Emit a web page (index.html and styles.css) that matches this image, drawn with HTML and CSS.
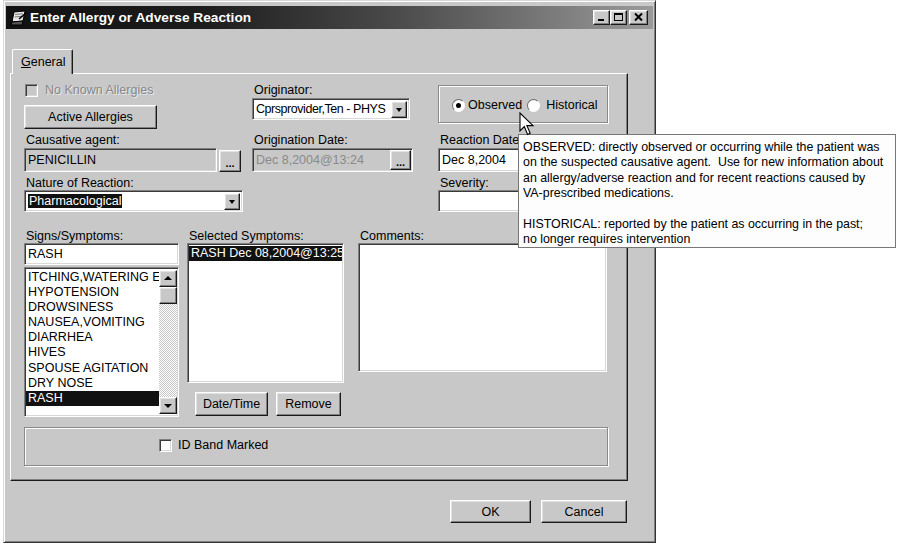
FILE: index.html
```html
<!DOCTYPE html>
<html lang="en">
<head>
    <meta charset="UTF-8">
    <title>Enter Allergy or Adverse Reaction</title>
    <link rel="stylesheet" href="styles.css">
</head>
<body>
<div class="screen">
    <div class="window">
        <div class="titlebar">
            <svg class="app-icon" width="17" height="16" viewBox="0 0 17 16">
                <polygon points="4,2 15,1 13,11 2,12" fill="#e8e8e8" stroke="#000" stroke-width="1"/>
                <line x1="5" y1="4.5" x2="13" y2="3.8" stroke="#777"/>
                <line x1="4.6" y1="7" x2="12.6" y2="6.3" stroke="#777"/>
                <polygon points="2,12 13,11 12,15 1,15" fill="#555" stroke="#000" stroke-width="1"/>
                <line x1="9" y1="9" x2="16" y2="3" stroke="#000" stroke-width="1.6"/>
            </svg>
            <span class="title">Enter Allergy or Adverse Reaction</span>
            <div class="caption-buttons">
                <span class="cap-btn raised">
                    <svg width="15" height="13" viewBox="0 0 15 13"><rect x="4" y="8" width="6" height="2" fill="#000"/></svg>
                </span>
                <span class="cap-btn raised">
                    <svg width="15" height="13" viewBox="0 0 15 13"><rect x="3.5" y="2.5" width="8" height="7" fill="none" stroke="#000"/><rect x="3" y="2" width="9" height="2" fill="#000"/></svg>
                </span>
                <span class="cap-btn cap-close raised">
                    <svg width="16" height="13" viewBox="0 0 16 13"><path d="M4 2.5 L11 9.5 M11 2.5 L4 9.5" stroke="#000" stroke-width="2"/></svg>
                </span>
            </div>
        </div>

        <div class="tabs">
            <div class="tab"><u>G</u>eneral</div>
        </div>

        <div class="panel">
            <div class="row row-top">
                <div class="col col-a">
                    <div class="check disabled"><span class="checkbox"></span>No Known Allergies</div>
                    <div class="btn raised btn-active">Active Allergies</div>
                </div>
                <div class="col col-b">
                    <div class="lbl">Originator:</div>
                    <div class="combo sunken combo-orig">
                        <span class="field-text tight">Cprsprovider,Ten - PHYS</span>
                        <span class="drop raised"></span>
                    </div>
                </div>
                <div class="col col-c">
                    <div class="group etched group-type">
                        <span class="radio on"></span><span class="opt-text">Observed</span>
                        <span class="radio"></span><span class="opt-text">Historical</span>
                    </div>
                </div>
            </div>

            <div class="row row-dates">
                <div class="col col-a">
                    <div class="lbl">Causative agent:</div>
                    <div class="field-line">
                        <div class="edit sunken readonly edit-agent"><span class="field-text">PENICILLIN</span></div>
                        <div class="btn raised btn-dots">...</div>
                    </div>
                </div>
                <div class="col col-b">
                    <div class="lbl">Origination Date:</div>
                    <div class="edit sunken readonly edit-orig">
                        <span class="field-text dim">Dec 8,2004@13:24</span>
                        <span class="btn raised btn-dots inner">...</span>
                    </div>
                </div>
                <div class="col col-c">
                    <div class="lbl">Reaction Date</div>
                    <div class="edit sunken edit-react"><span class="field-text">Dec 8,2004</span></div>
                </div>
            </div>

            <div class="row row-nature">
                <div class="col col-a">
                    <div class="lbl">Nature of Reaction:</div>
                    <div class="combo sunken combo-nature">
                        <span class="field-text"><span class="hilite">Pharmacological</span></span>
                        <span class="drop raised"></span>
                    </div>
                </div>
                <div class="col col-b"></div>
                <div class="col col-c">
                    <div class="lbl">Severity:</div>
                    <div class="edit sunken edit-severity"></div>
                </div>
            </div>

            <div class="row row-symptoms">
                <div class="col col-signs">
                    <div class="lbl">Signs/Symptoms:</div>
                    <div class="edit sunken edit-search"><span class="field-text">RASH</span></div>
                    <div class="listbox sunken list-signs">
                        <div class="items">
                            <div class="item">ITCHING,WATERING EYES</div>
                            <div class="item">HYPOTENSION</div>
                            <div class="item">DROWSINESS</div>
                            <div class="item">NAUSEA,VOMITING</div>
                            <div class="item">DIARRHEA</div>
                            <div class="item">HIVES</div>
                            <div class="item">SPOUSE AGITATION</div>
                            <div class="item">DRY NOSE</div>
                            <div class="item selected">RASH</div>
                        </div>
                        <div class="scrollbar">
                            <span class="sb-btn raised sb-up"></span>
                            <span class="sb-btn raised sb-thumb"></span>
                            <span class="sb-track"></span>
                            <span class="sb-btn raised sb-down"></span>
                        </div>
                    </div>
                </div>
                <div class="col col-selected">
                    <div class="lbl">Selected Symptoms:</div>
                    <div class="listbox sunken list-selected">
                        <div class="items">
                            <div class="item selected">RASH Dec 08,2004@13:25</div>
                        </div>
                    </div>
                    <div class="btn-row">
                        <div class="btn raised btn-date">Date/Time</div>
                        <div class="btn raised btn-remove">Remove</div>
                    </div>
                </div>
                <div class="col col-comments">
                    <div class="lbl">Comments:</div>
                    <div class="memo sunken"></div>
                </div>
            </div>

            <div class="row row-band">
                <div class="group etched group-band">
                    <div class="check"><span class="checkbox white"></span>ID Band Marked</div>
                </div>
            </div>
        </div>

        <div class="footer">
            <div class="btn raised btn-ok">OK</div>
            <div class="btn raised btn-cancel">Cancel</div>
        </div>
    </div>

    <div class="tooltip">
        <div class="tip-line">OBSERVED: directly observed or occurring while the patient was</div>
        <div class="tip-line">on the suspected causative agent.  Use for new information about</div>
        <div class="tip-line">an allergy/adverse reaction and for recent reactions caused by</div>
        <div class="tip-line">VA-prescribed medications.</div>
        <div class="tip-line">&nbsp;</div>
        <div class="tip-line">HISTORICAL: reported by the patient as occurring in the past;</div>
        <div class="tip-line">no longer requires intervention</div>
    </div>

    <svg class="cursor" width="16" height="25" viewBox="0 0 16 25">
        <path d="M1 1 L1 19 L5.3 14.6 L8.6 22.4 L11.2 21.2 L7.9 13.6 L14 13.6 Z" fill="#fff" stroke="#000" stroke-width="1.1" stroke-linejoin="miter"/>
    </svg>
</div>
</body>
</html>
```

FILE: styles.css
```css
* {
    box-sizing: border-box;
}
body {
    margin: 0;
    background-color: #fff;
    font-family: 'Liberation Sans', Arial, sans-serif;
    font-size: 12.5px;
    color: #000;
}
.screen {
    position: relative;
    width: 899px;
    height: 545px;
    overflow: hidden;
}

/* 3d borders, classic style */
.raised {
    background-color: #c8c8c8;
    border: 1px solid;
    border-color: #fff #1a1a1a #1a1a1a #fff;
    box-shadow: inset -1px -1px #808080, inset 1px 1px #e2e2e2;
}
.sunken {
    background-color: #fff;
    border: 1px solid;
    border-color: #808080 #fff #fff #808080;
    box-shadow: inset 1px 1px #3a3a3a, inset -1px -1px #d8d8d8;
}
.etched {
    border: 1px solid #8a8a8a;
    box-shadow: inset 1px 1px #fff, 1px 1px #fff;
}

/* window frame */
.window {
    margin-left: 3px;
    width: 653px;
    height: 543px;
    background-color: #c8c8c8;
    border: 1px solid;
    border-color: #d8d8d8 #333 #333 #d8d8d8;
    box-shadow: inset 1px 1px #fff, inset -1px -1px #808080;
    padding: 5px 2px 0 2px;
}
.titlebar {
    height: 23px;
    display: flex;
    align-items: center;
    padding: 0 5px 0 4px;
    background: linear-gradient(90deg, #111 0%, #1c1c1c 30%, #4a4a4a 60%, #9a9a9a 100%);
}
.app-icon {
    flex: none;
}
.title {
    margin-left: 3px;
    color: #fff;
    font-weight: bold;
    font-size: 13.7px;
    white-space: nowrap;
}
.caption-buttons {
    margin-left: auto;
    display: flex;
}
.cap-btn {
    width: 17px;
    height: 15px;
    display: flex;
    align-items: center;
    justify-content: center;
}
.cap-close {
    width: 19px;
    margin-left: 2px;
}

/* tab strip */
.tabs {
    display: flex;
    margin-top: 20px;
    padding-left: 6px;
    position: relative;
    z-index: 1;
}
.tab {
    width: 61px;
    height: 25px;
    margin-bottom: -1px;
    padding: 5px 0 0 8px;
    background-color: #c8c8c8;
    border-top: 1px solid #fff;
    border-left: 1px solid #fff;
    border-right: 1px solid #1a1a1a;
    box-shadow: inset -1px 0 #808080;
    border-radius: 2px 2px 0 0;
}
.panel {
    margin-left: 4px;
    width: 618px;
    height: 408px;
    border: 1px solid;
    border-color: #fff #1a1a1a #1a1a1a #fff;
    box-shadow: inset -1px -1px #808080;
    padding: 9px 0 0 13px;
}

/* form rows */
.row {
    display: flex;
}
.col-a {
    width: 219px;
}
.col-b {
    width: 161px;
    margin-left: 9px;
}
.col-c {
    width: 170px;
    margin-left: 25px;
}
.row-dates {
    margin-top: 4px;
}
.row-nature {
    margin-top: 5px;
}
.row-symptoms {
    margin-top: 18px;
}
.row-band {
    margin-top: 10px;
}
.lbl {
    height: 15px;
    line-height: 14px;
    padding-left: 2px;
    white-space: nowrap;
}
.row-nature .lbl,
.row-symptoms .lbl {
    height: 13px;
    line-height: 12px;
}

.check {
    display: flex;
    align-items: center;
    height: 14px;
    white-space: nowrap;
}
.check.disabled {
    color: #888;
    text-shadow: 1px 1px #e8e8e8;
}
.checkbox {
    width: 13px;
    height: 13px;
    margin: 0 7px 0 1px;
    border: 1px solid;
    border-color: #808080 #fff #fff #808080;
    box-shadow: inset 1px 1px #3a3a3a, inset -1px -1px #d8d8d8;
    background-color: #c8c8c8;
}
.checkbox.white {
    background-color: #fff;
    margin-right: 6px;
}

.btn {
    display: flex;
    align-items: center;
    justify-content: center;
    white-space: nowrap;
}
.btn-active {
    width: 133px;
    height: 24px;
    margin-top: 8px;
}
.btn-dots {
    width: 22px;
    height: 22px;
    margin-left: 2px;
    font-weight: bold;
    font-size: 11px;
    padding-top: 4px;
    align-self: flex-end;
}
.btn-dots.inner {
    width: 21px;
    height: 20px;
    margin: 0 0 0 auto;
    align-self: center;
}

.field-line {
    display: flex;
    height: 24px;
}
.field-text {
    padding-left: 3px;
    white-space: nowrap;
    overflow: hidden;
}
.field-text.tight {
    letter-spacing: -0.45px;
}
.field-text.dim {
    color: #8a8a8a;
}
.edit {
    display: flex;
    align-items: center;
    height: 24px;
    padding-right: 1px;
}
.edit.readonly {
    background-color: #c8c8c8;
}
.edit-agent {
    width: 193px;
}
.edit-orig {
    width: 161px;
}
.edit-react {
    width: 170px;
}
.edit-severity {
    width: 170px;
    height: 22px;
}

.combo {
    display: flex;
    align-items: center;
    height: 22px;
    padding-right: 2px;
}
.combo .field-text {
    flex: 1;
}
.combo-orig {
    width: 158px;
}
.combo-nature {
    width: 219px;
}
.drop {
    position: relative;
    width: 16px;
    height: 17px;
    flex: none;
}
.drop::after {
    content: '';
    position: absolute;
    left: 4px;
    top: 6px;
    border-left: 3.5px solid transparent;
    border-right: 3.5px solid transparent;
    border-top: 4px solid #000;
}
.hilite {
    background-color: #111;
    color: #fff;
    padding: 1px 1px;
}

.group {
    display: flex;
    align-items: center;
}
.group-type {
    height: 38px;
    margin-top: 2px;
    padding-left: 13px;
    padding-top: 2px;
}
.radio {
    width: 13px;
    height: 13px;
    border-radius: 50%;
    border: 1px solid;
    border-color: #6a6a6a #fff #fff #6a6a6a;
    background-color: #fff;
    position: relative;
    flex: none;
}
.radio.on::after {
    content: '';
    position: absolute;
    left: 3px;
    top: 3px;
    width: 5px;
    height: 5px;
    border-radius: 50%;
    background-color: #000;
}
.opt-text {
    margin: 0 5px 0 3px;
}
.opt-text + .radio {
    margin-right: 3px;
}

/* symptom lists */
.col-signs {
    width: 155px;
}
.col-selected {
    width: 157px;
    margin-left: 8px;
}
.col-comments {
    width: 249px;
    margin-left: 14px;
}
.edit-search {
    height: 22px;
    width: 155px;
}
.listbox {
    display: flex;
    padding: 1px;
}
.list-signs {
    margin-top: 2px;
    height: 150px;
}
.list-selected {
    height: 140px;
}
.items {
    flex: 1;
    overflow: hidden;
    padding-top: 1px;
}
.item {
    height: 15.1px;
    line-height: 15px;
    padding-left: 2px;
    white-space: nowrap;
    overflow: hidden;
}
.item.selected {
    background-color: #111;
    color: #fff;
}
.scrollbar {
    width: 18px;
    display: flex;
    flex-direction: column;
    padding: 1px 0;
}
.sb-btn {
    height: 17px;
    flex: none;
    position: relative;
}
.sb-track {
    flex: 1;
    background-color: #e4e4e4;
    background-image: repeating-conic-gradient(#c8c8c8 0 25%, #fff 0 50%);
    background-size: 2px 2px;
}
.sb-up::after,
.sb-down::after {
    content: '';
    position: absolute;
    left: 4px;
    border-left: 4px solid transparent;
    border-right: 4px solid transparent;
}
.sb-up::after {
    top: 5px;
    border-bottom: 4px solid #000;
}
.sb-down::after {
    top: 6px;
    border-top: 4px solid #000;
}
.btn-row {
    display: flex;
    margin-top: 9px;
}
.btn-date {
    width: 73px;
    height: 24px;
    margin-left: 8px;
}
.btn-remove {
    width: 65px;
    height: 24px;
    margin-left: 8px;
}
.memo {
    height: 129px;
}

.group-band {
    width: 584px;
    height: 39px;
    padding-left: 133px;
    padding-bottom: 3px;
}

/* dialog buttons */
.footer {
    display: flex;
    justify-content: flex-end;
    margin-top: 19px;
    padding-right: 26px;
}
.btn-ok {
    width: 81px;
    height: 23px;
}
.btn-cancel {
    width: 86px;
    height: 23px;
    margin-left: 10px;
}

/* hint popup and mouse pointer */
.tooltip {
    position: absolute;
    left: 518px;
    top: 134px;
    width: 378px;
    height: 114px;
    background-color: #fdfdfd;
    border: 1px solid #777;
    padding: 5px 0 0 4px;
    font-size: 12.4px;
}
.tip-line {
    height: 15.4px;
    line-height: 15px;
    white-space: pre;
}
.cursor {
    position: absolute;
    left: 519px;
    top: 112px;
}
```
